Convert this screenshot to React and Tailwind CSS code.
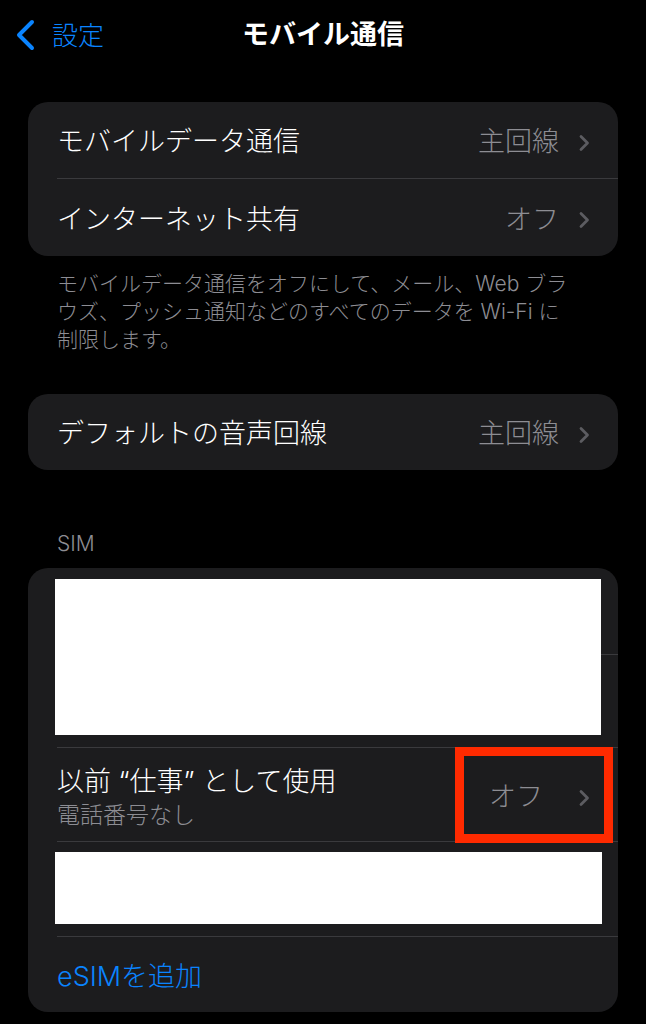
import { useState } from "react";

const Chevron = () => (
  <svg width="12" height="18" viewBox="0 0 12 18" className="shrink-0">
    <path d="M3 2.5l6.5 6.5-6.5 6.5" fill="none" stroke="#5c5c61" strokeWidth="2.8" strokeLinecap="round" strokeLinejoin="round" />
  </svg>
);

const Row = ({ label, value, last }) => (
  <div className={`flex h-[77px] items-center pt-[5px] ml-[29px] pr-[28px] ${last ? "" : "border-b border-[#3a3a3d]"}`}>
    <span className="flex-1 text-[27px] font-light text-white">{label}</span>
    <span className="text-[27px] font-light text-[#8d8d93] mr-[19px]">{value}</span>
    <Chevron />
  </div>
);

export default function App() {
  const [page] = useState("mobile");

  return (
    <div
      className="w-[646px] h-[1024px] bg-black overflow-hidden"
      style={{ fontFamily: 'Inter, "Noto Sans CJK JP", sans-serif' }}
      data-page={page}
    >
      {/* nav bar */}
      <div className="relative flex h-[70px] items-center justify-center">
        <div className="absolute left-[14px] top-0 flex h-[70px] items-center gap-[14px]">
          <svg width="24" height="32" viewBox="0 0 24 32">
            <path d="M18 3L5 16l13 13" fill="none" stroke="#0a84ff" strokeWidth="4" strokeLinecap="round" strokeLinejoin="round" />
          </svg>
          <span className="text-[26px] font-light text-[#0a84ff]">設定</span>
        </div>
        <h1 className="text-[27px] font-semibold text-white">モバイル通信</h1>
      </div>

      <div className="px-[28px]">
        <div className="mt-[32px] rounded-[20px] bg-[#1c1c1e]">
          <Row label="モバイルデータ通信" value="主回線" />
          <Row label="インターネット共有" value="オフ" last />
        </div>

        <p className="mt-[14px] px-[29px] text-[21px] font-light leading-[28px] text-[#8d8d93]">
          モバイルデータ通信をオフにして、メール、Web ブラ
          <br />
          ウズ、プッシュ通知などのすべてのデータを Wi-Fi に
          <br />
          制限します。
        </p>

        <div className="mt-[40px] rounded-[20px] bg-[#1c1c1e]">
          <div className="flex h-[76px] items-center pt-[5px] ml-[29px] pr-[28px]">
            <span className="flex-1 text-[27px] font-light text-white">デフォルトの音声回線</span>
            <span className="text-[27px] font-light text-[#8d8d93] mr-[19px]">主回線</span>
            <Chevron />
          </div>
        </div>

        <div className="mt-[60px] px-[29px] text-[21px] font-light leading-[28px] text-[#8d8d93]">SIM</div>

        <div className="relative mt-[10px] rounded-[20px] bg-[#1c1c1e] overflow-hidden">
          <div className="ml-[29px] h-[87px] border-b border-[#3a3a3d]" />
          <div className="ml-[29px] h-[93px] border-b border-[#3a3a3d]" />
          <div className="absolute left-[27px] top-[11px] h-[156px] w-[546px] bg-white" />

          <div className="relative flex h-[94px] items-center pt-[6px] ml-[29px] pr-[28px] border-b border-[#3a3a3d]">
            <div className="flex-1">
              <div className="text-[27px] font-light leading-[34px] text-white">以前 “仕事” として使用</div>
              <div className="text-[23px] font-light leading-[32px] text-[#8d8d93]">電話番号なし</div>
            </div>
            <span className="text-[27px] font-light text-[#8d8d93] mr-[35px]">オフ</span>
            <Chevron />
          </div>

          <div className="relative ml-[29px] h-[95px] border-b border-[#3a3a3d]" />
          <div className="absolute left-[27px] top-[284px] h-[72px] w-[547px] bg-white" />

          <div className="flex h-[75px] items-center pt-[6px] ml-[29px]">
            <span className="text-[27px] font-light text-[#0a84ff]">eSIMを追加</span>
          </div>

          {/* highlight box */}
          <div className="absolute left-[427px] top-[179px] h-[96px] w-[158px] border-[9px] border-[#ff2a00]" />
        </div>
      </div>
    </div>
  );
}
